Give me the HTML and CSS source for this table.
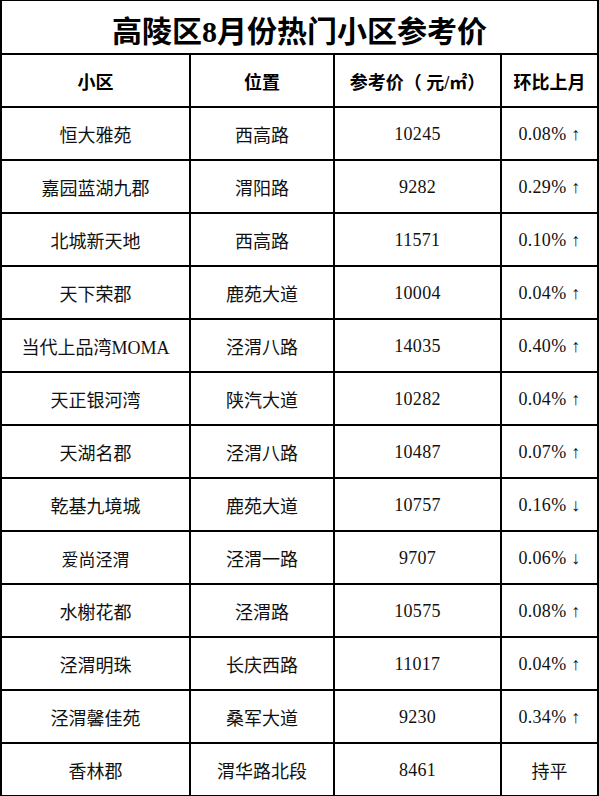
FILE: index.html
```html
<!DOCTYPE html>
<html lang="zh-CN">
<head>
<meta charset="utf-8">
<title>高陵区8月份热门小区参考价</title>
<link rel="stylesheet" href="styles.css">
</head>
<body>
<div class="sheet">
  <div class="cell title">高陵区8月份热门小区参考价</div>

  <div class="cell head">小区</div>
  <div class="cell head">位置</div>
  <div class="cell head">参考价（ 元/㎡）</div>
  <div class="cell head">环比上月</div>

  <div class="cell">恒大雅苑</div><div class="cell">西高路</div><div class="cell num">10245</div><div class="cell num">0.08% ↑</div>
  <div class="cell">嘉园蓝湖九郡</div><div class="cell">渭阳路</div><div class="cell num">9282</div><div class="cell num">0.29% ↑</div>
  <div class="cell">北城新天地</div><div class="cell">西高路</div><div class="cell num">11571</div><div class="cell num">0.10% ↑</div>
  <div class="cell">天下荣郡</div><div class="cell">鹿苑大道</div><div class="cell num">10004</div><div class="cell num">0.04% ↑</div>
  <div class="cell">当代上品湾MOMA</div><div class="cell">泾渭八路</div><div class="cell num">14035</div><div class="cell num">0.40% ↑</div>
  <div class="cell">天正银河湾</div><div class="cell">陕汽大道</div><div class="cell num">10282</div><div class="cell num">0.04% ↑</div>
  <div class="cell">天湖名郡</div><div class="cell">泾渭八路</div><div class="cell num">10487</div><div class="cell num">0.07% ↑</div>
  <div class="cell">乾基九境城</div><div class="cell">鹿苑大道</div><div class="cell num">10757</div><div class="cell num">0.16% ↓</div>
  <div class="cell small">爱尚泾渭</div><div class="cell">泾渭一路</div><div class="cell num">9707</div><div class="cell num">0.06% ↓</div>
  <div class="cell">水榭花都</div><div class="cell">泾渭路</div><div class="cell num">10575</div><div class="cell num">0.08% ↑</div>
  <div class="cell">泾渭明珠</div><div class="cell">长庆西路</div><div class="cell num">11017</div><div class="cell num">0.04% ↑</div>
  <div class="cell">泾渭馨佳苑</div><div class="cell">桑军大道</div><div class="cell num">9230</div><div class="cell num">0.34% ↑</div>
  <div class="cell">香林郡</div><div class="cell">渭华路北段</div><div class="cell num">8461</div><div class="cell">持平</div>
</div>
</body>
</html>
```

FILE: styles.css
```css
html, body {
  margin: 0;
  padding: 0;
  background: #fff;
}

.sheet {
  display: grid;
  grid-template-columns: 187px 142px 165px 95px;
  grid-template-rows: 52px repeat(14, 51px);
  gap: 2px;
  padding: 1px 2px 1px 2px;
  background: #000;
  width: 599px;
  height: 796px;
  box-sizing: border-box;
  font-family: "Liberation Serif", "Noto Sans CJK SC", serif;
  font-size: 18px;
  color: #111;
}

.cell {
  background: #fff;
  display: flex;
  align-items: center;
  justify-content: center;
  padding-top: 1px;
  box-sizing: border-box;
  white-space: nowrap;
}

.title {
  grid-column: 1 / -1;
  font-size: 30px;
  font-weight: 700;
  color: #000;
  padding-top: 3px;
}

.head {
  font-weight: 700;
  color: #000;
  padding-top: 1px;
}

.num {
  font-size: 18px;
  letter-spacing: 0.3px;
}

.small {
  font-size: 17px;
}
```
